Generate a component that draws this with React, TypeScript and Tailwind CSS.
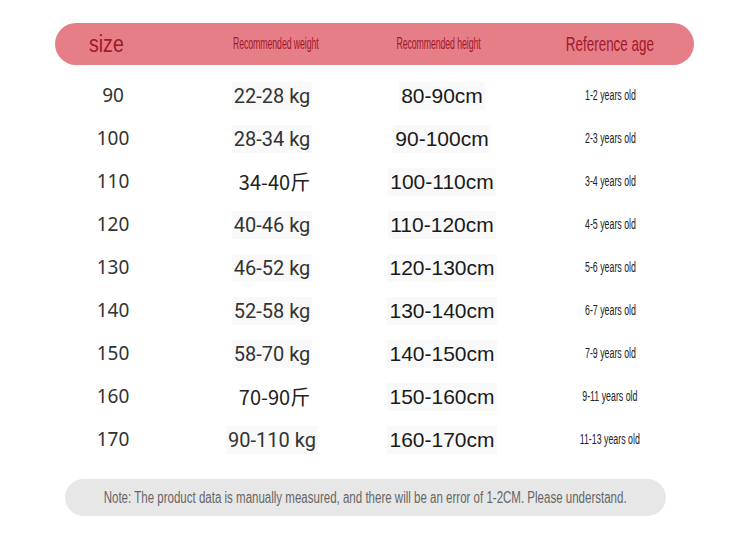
const rows = [
  { size: '90', weight: '22-28 kg', height: '80-90cm', age: '1-2 years old' },
  { size: '100', weight: '28-34 kg', height: '90-100cm', age: '2-3 years old' },
  { size: '110', weight: '34-40斤', height: '100-110cm', age: '3-4 years old' },
  { size: '120', weight: '40-46 kg', height: '110-120cm', age: '4-5 years old' },
  { size: '130', weight: '46-52 kg', height: '120-130cm', age: '5-6 years old' },
  { size: '140', weight: '52-58 kg', height: '130-140cm', age: '6-7 years old' },
  { size: '150', weight: '58-70 kg', height: '140-150cm', age: '7-9 years old' },
  { size: '160', weight: '70-90斤', height: '150-160cm', age: '9-11 years old' },
  { size: '170', weight: '90-110 kg', height: '160-170cm', age: '11-13 years old' },
]

const arial = { fontFamily: '"Liberation Sans", Arial, sans-serif' }

export default function App() {
  return (
    <div className="w-[750px] h-[536px] bg-white overflow-hidden pt-[23px]">
      {/* header bar */}
      <div
        className="ml-[55px] w-[639px] h-[42px] rounded-full bg-[#e57e87] grid grid-cols-[143px_148px_192px_144px] items-center text-[#a2182b]"
        style={arial}
      >
        <div className="pl-[34px]">
          <span className="inline-block text-[23px] scale-x-[0.85] origin-left">size</span>
        </div>
        <div className="text-center">
          <span className="inline-block text-[16px] tracking-[-0.2px] scale-x-[0.55] whitespace-nowrap">Recommended weight</span>
        </div>
        <div className="text-center -translate-x-[4px]">
          <span className="inline-block text-[16px] tracking-[-0.2px] scale-x-[0.55] whitespace-nowrap">Recommended height</span>
        </div>
        <div className="text-center">
          <span className="inline-block text-[21px] scale-x-[0.64] whitespace-nowrap">Reference age</span>
        </div>
      </div>

      {/* rows */}
      <div className="mt-[9px] pl-[28px]">
        {rows.map((r) => (
          <div key={r.size} className="h-[43px] grid grid-cols-[170px_148px_192px_144px] items-center">
            <div className="text-center text-[19px] text-[#333]" style={{ fontFamily: '"Noto Sans", sans-serif' }}>
              {r.size}
            </div>
            <div className="flex justify-center">
              {r.weight.includes('斤') ? (
                <span
                  className="text-[20px] text-[#222] pl-[5px]"
                  style={{ fontFamily: '"Noto Sans CJK SC", "Noto Sans", sans-serif' }}
                >
                  {r.weight}
                </span>
              ) : (
                <span
                  className="text-[20px] text-[#333] bg-[#f9f9f9] px-[2px] leading-[28px]"
                  style={{ fontFamily: 'Roboto, sans-serif' }}
                >
                  {r.weight}
                </span>
              )}
            </div>
            <div className="flex justify-center">
              <span className="text-[21px] text-[#1a1a1a] bg-[#f9f9f9] px-[2px] leading-[28px]" style={arial}>
                {r.height}
              </span>
            </div>
            <div className="flex justify-center">
              <span className="inline-block text-[14px] text-[#222] scale-x-[0.63] whitespace-nowrap" style={arial}>
                {r.age}
              </span>
            </div>
          </div>
        ))}
      </div>

      {/* note */}
      <div className="mt-[18px] ml-[65px] w-[601px] h-[37px] rounded-full bg-[#e7e7e7] flex items-center justify-center">
        <span className="inline-block text-[16px] text-[#666] scale-x-[0.72] whitespace-nowrap" style={arial}>
          Note: The product data is manually measured, and there will be an error of 1-2CM. Please understand.
        </span>
      </div>
    </div>
  )
}
